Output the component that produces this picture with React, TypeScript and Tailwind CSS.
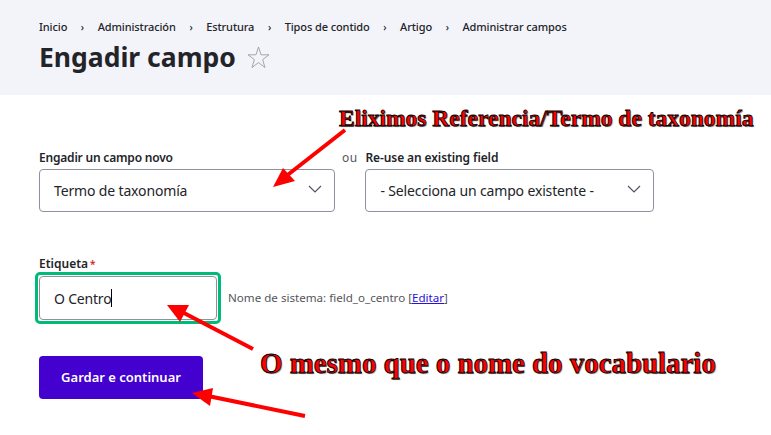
const crumbs = ['Inicio', 'Administración', 'Estrutura', 'Tipos de contido', 'Artigo', 'Administrar campos'];

const annotation =
  'absolute whitespace-nowrap font-["Liberation_Serif",serif] font-bold text-[#f00] [-webkit-text-stroke:0.8px_#000] [text-shadow:1px_1px_1px_#888]';

function Chevron() {
  return (
    <svg width="14" height="8" viewBox="0 0 14 8" fill="none" stroke="#545560" strokeWidth="1.2" className="mb-[3px]">
      <path d="M1 1l6 6 6-6" />
    </svg>
  );
}

function SelectBox({ label, width }: { label: string; width: string }) {
  return (
    <div className={`flex h-[43px] items-center justify-between rounded-sm border border-[#8e929c] bg-white pl-[14px] pr-[12px] text-[14px] tracking-[-0.15px] text-[#232429] ${width}`}>
      <span>{label}</span>
      <Chevron />
    </div>
  );
}

export default function App() {
  return (
    <div className="relative h-[435px] w-[771px] overflow-hidden bg-white font-['Noto_Sans',sans-serif] text-[#232429]">
      <header className="h-[95px] bg-[#f3f4f9] px-[39px] pt-[19px]">
        <ol className="flex h-[17px] items-center text-[11px] font-medium tracking-[-0.1px]">
          {crumbs.map((crumb, i) => (
            <li key={crumb} className="flex items-center">
              {i > 0 && <span className="mx-[13.6px] text-[10px]">›</span>}
              {crumb}
            </li>
          ))}
        </ol>
        <div className="mt-[2px] flex items-center gap-[11px]">
          <h1 className="text-[26.5px] leading-[38px] font-bold">Engadir campo</h1>
          <svg width="23" height="23" viewBox="0 0 23 23" fill="none" stroke="#9a9da6" strokeWidth="0.9">
            <polygon points="11.5,1 14,8.8 22,8.8 15.6,13.6 18,21.5 11.5,16.6 5,21.5 7.4,13.6 1,8.8 9,8.8" />
          </svg>
        </div>
      </header>

      <main className="px-[39px]">
        <div className="mt-[54px] flex">
          <div>
            <div className="mb-[3px] h-[17px] text-[12px] leading-[17px] font-semibold tracking-[-0.2px]">Engadir un campo novo</div>
            <SelectBox label="Termo de taxonomía" width="w-[296px]" />
          </div>
          <span className="ml-[7px] mr-[8px] h-[17px] text-[12px] leading-[17px] tracking-[0.4px] text-[#55565b]">ou</span>
          <div>
            <div className="mb-[3px] h-[17px] text-[12px] leading-[17px] font-semibold tracking-[-0.1px]">Re-use an existing field</div>
            <SelectBox label="- Selecciona un campo existente -" width="w-[289px]" />
          </div>
        </div>

        <div className="mt-[43px] h-[17px] text-[12px] leading-[17px] font-semibold">
          Etiqueta<span className="ml-[2px] text-[10px] text-[#d72222]">*</span>
        </div>
        <div className="-ml-[4px] flex items-center">
          <div className="h-[52px] w-[186px] rounded-[5px] border-[3px] border-[#00bb77] bg-white p-[1px]">
            <div className="flex h-full items-center rounded-sm border border-[#8e929c] pl-[14px] text-[14px] tracking-[-0.2px]">
              O Centro<span className="h-[18px] w-px bg-black" />
            </div>
          </div>
          <span className="ml-[7px] text-[11.6px] text-[#55565b]">
            Nome de sistema: field_o_centro [<a className="text-[#2a10d8] underline">Editar</a>]
          </span>
        </div>

        <button className="mt-[32px] h-[43px] w-[164px] rounded-sm bg-[#4300cf] text-[13px] font-semibold text-white">
          Gardar e continuar
        </button>
      </main>

      <div className={`${annotation} left-[339px] top-[104px] text-[23.5px] leading-[28px]`}>Eliximos Referencia/Termo de taxonomía</div>
      <div className={`${annotation} left-[260px] top-[347px] text-[28.9px] leading-[32px]`}>O mesmo que o nome do vocabulario</div>

      <svg className="pointer-events-none absolute left-0 top-0" width="771" height="435" viewBox="0 0 771 435">
        <g fill="#f00" stroke="#f00" strokeWidth="4">
          <line x1="345" y1="130" x2="285" y2="177" />
          <line x1="253" y1="349" x2="184" y2="313" />
          <line x1="305" y1="416" x2="208" y2="396" />
        </g>
        <g fill="#f00">
          <polygon points="273,187 283,168 295,181" />
          <polygon points="167,305 189,305 180,322" />
          <polygon points="192,393 213,388 210,406" />
        </g>
      </svg>
    </div>
  );
}
